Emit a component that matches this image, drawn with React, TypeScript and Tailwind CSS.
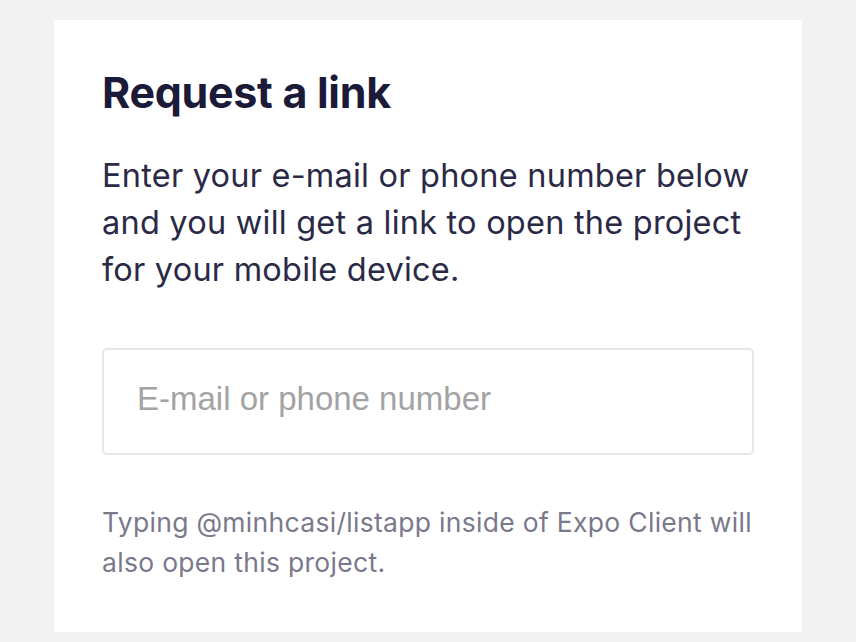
import React from "react";

export default function App() {
  return (
    <div className="min-h-[642px] w-full bg-[#f2f2f2] pt-[20px] pb-[10px]" style={{ fontFamily: "Inter, 'Noto Sans', sans-serif" }}>
      <div className="mx-auto w-[748px] bg-white px-[48px] pt-[48px] pb-[50px]">
        <h1 className="text-[43px] font-bold leading-[48px] text-[#1b1a38] tracking-[-0.3px]">Request a link</h1>
        <p className="mt-[36px] text-[32.5px] leading-[47px] text-[#2b2a46] tracking-[0.22px]">
          Enter your e-mail or phone number below and you will get a link to open the project for your mobile device.
        </p>
        <input
          className="mt-[55px] block h-[107px] w-full rounded-[5px] border-2 border-[#e6e6e6] pl-[33px] pr-[33px] pb-[5px] text-[33px] text-[#333] placeholder:text-[#a3a3a3] outline-none"
          style={{ fontFamily: "'Liberation Sans', Arial, sans-serif" }}
          placeholder="E-mail or phone number"
        />
        <p className="mt-[47px] text-[26.5px] leading-[40px] text-[#7a798b] tracking-[0.3px]">
          Typing @minhcasi/listapp inside of Expo Client will also open this project.
        </p>
      </div>
    </div>
  );
}
